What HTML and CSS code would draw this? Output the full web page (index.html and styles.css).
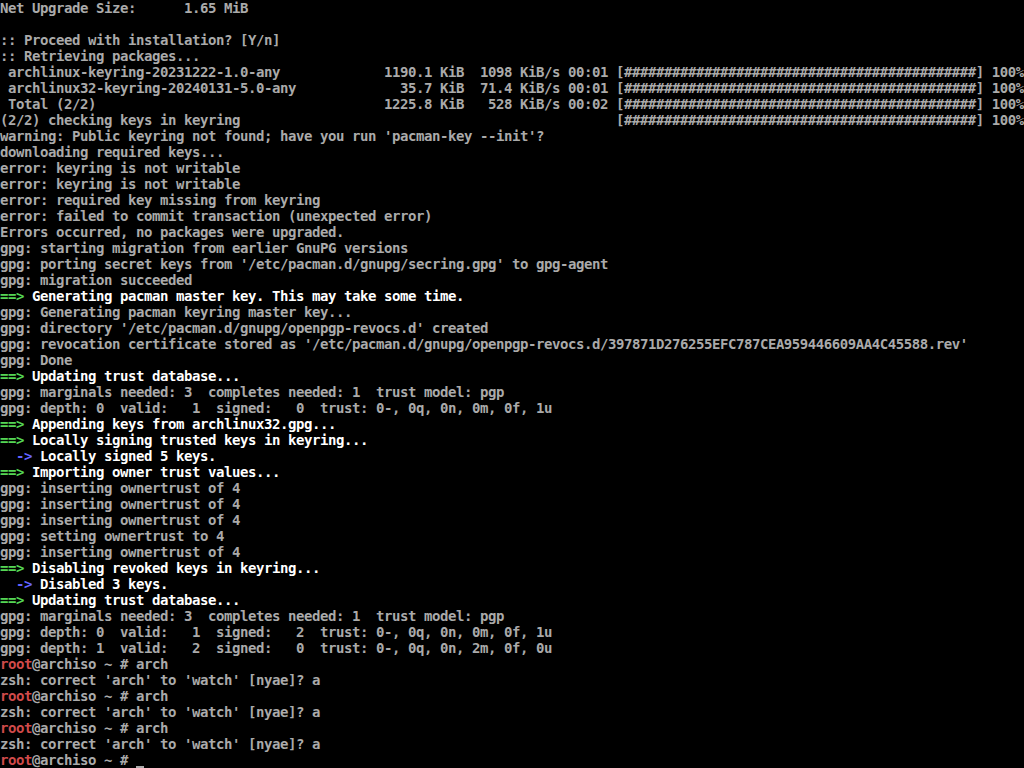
FILE: index.html
```html
<!DOCTYPE html>
<html>
<head>
<meta charset="utf-8">
<title>archiso console</title>
<link rel="stylesheet" href="styles.css">
</head>
<body>
<div class="screen">
<div class="l">Net Upgrade Size:      1.65 MiB</div>
<div class="l"> </div>
<div class="l">:: Proceed with installation? [Y/n]</div>
<div class="l">:: Retrieving packages...</div>
<div class="l"> archlinux-keyring-20231222-1.0-any             1190.1 KiB  1098 KiB/s 00:01 [############################################] 100%</div>
<div class="l"> archlinux32-keyring-20240131-5.0-any             35.7 KiB  71.4 KiB/s 00:01 [############################################] 100%</div>
<div class="l"> Total (2/2)                                    1225.8 KiB   528 KiB/s 00:02 [############################################] 100%</div>
<div class="l">(2/2) checking keys in keyring                                               [############################################] 100%</div>
<div class="l">warning: Public keyring not found; have you run 'pacman-key --init'?</div>
<div class="l">downloading required keys...</div>
<div class="l">error: keyring is not writable</div>
<div class="l">error: keyring is not writable</div>
<div class="l">error: required key missing from keyring</div>
<div class="l">error: failed to commit transaction (unexpected error)</div>
<div class="l">Errors occurred, no packages were upgraded.</div>
<div class="l">gpg: starting migration from earlier GnuPG versions</div>
<div class="l">gpg: porting secret keys from '/etc/pacman.d/gnupg/secring.gpg' to gpg-agent</div>
<div class="l">gpg: migration succeeded</div>
<div class="l"><span class="g">==&gt;</span> <span class="w">Generating pacman master key. This may take some time.</span></div>
<div class="l">gpg: Generating pacman keyring master key...</div>
<div class="l">gpg: directory '/etc/pacman.d/gnupg/openpgp-revocs.d' created</div>
<div class="l">gpg: revocation certificate stored as '/etc/pacman.d/gnupg/openpgp-revocs.d/397871D276255EFC787CEA959446609AA4C45588.rev'</div>
<div class="l">gpg: Done</div>
<div class="l"><span class="g">==&gt;</span> <span class="w">Updating trust database...</span></div>
<div class="l">gpg: marginals needed: 3  completes needed: 1  trust model: pgp</div>
<div class="l">gpg: depth: 0  valid:   1  signed:   0  trust: 0-, 0q, 0n, 0m, 0f, 1u</div>
<div class="l"><span class="g">==&gt;</span> <span class="w">Appending keys from archlinux32.gpg...</span></div>
<div class="l"><span class="g">==&gt;</span> <span class="w">Locally signing trusted keys in keyring...</span></div>
<div class="l">  <span class="b">-&gt;</span> <span class="w">Locally signed 5 keys.</span></div>
<div class="l"><span class="g">==&gt;</span> <span class="w">Importing owner trust values...</span></div>
<div class="l">gpg: inserting ownertrust of 4</div>
<div class="l">gpg: inserting ownertrust of 4</div>
<div class="l">gpg: inserting ownertrust of 4</div>
<div class="l">gpg: setting ownertrust to 4</div>
<div class="l">gpg: inserting ownertrust of 4</div>
<div class="l"><span class="g">==&gt;</span> <span class="w">Disabling revoked keys in keyring...</span></div>
<div class="l">  <span class="b">-&gt;</span> <span class="w">Disabled 3 keys.</span></div>
<div class="l"><span class="g">==&gt;</span> <span class="w">Updating trust database...</span></div>
<div class="l">gpg: marginals needed: 3  completes needed: 1  trust model: pgp</div>
<div class="l">gpg: depth: 0  valid:   1  signed:   2  trust: 0-, 0q, 0n, 0m, 0f, 1u</div>
<div class="l">gpg: depth: 1  valid:   2  signed:   0  trust: 0-, 0q, 0n, 2m, 0f, 0u</div>
<div class="l"><span class="r">root</span>@archiso ~ # arch</div>
<div class="l">zsh: correct 'arch' to 'watch' [nyae]? a</div>
<div class="l"><span class="r">root</span>@archiso ~ # arch</div>
<div class="l">zsh: correct 'arch' to 'watch' [nyae]? a</div>
<div class="l"><span class="r">root</span>@archiso ~ # arch</div>
<div class="l">zsh: correct 'arch' to 'watch' [nyae]? a</div>
<div class="l"><span class="r">root</span>@archiso ~ # <span class="cursor"> </span></div>
</div>
</body>
</html>
```
FILE: styles.css
```css
html, body {
  margin: 0;
  padding: 0;
  background: #000;
}
.screen {
  width: 1024px;
  height: 768px;
  overflow: hidden;
  background: #000;
  color: #aaaaaa;
  font-family: "DejaVu Sans Mono", "Liberation Mono", monospace;
  font-size: 14px;
  font-weight: bold;
  letter-spacing: -0.43px;
}
.l {
  height: 16px;
  line-height: 16px;
  white-space: pre;
}
.g { color: #55d655; }
.b { color: #6464ff; }
.w { color: #ffffff; }
.r { color: #d04a4a; }
.cursor {
  display: inline-block;
  width: 8px;
  height: 16px;
  vertical-align: top;
  background: linear-gradient(to bottom, transparent 14px, #aaaaaa 14px, #aaaaaa 16px);
}
```
